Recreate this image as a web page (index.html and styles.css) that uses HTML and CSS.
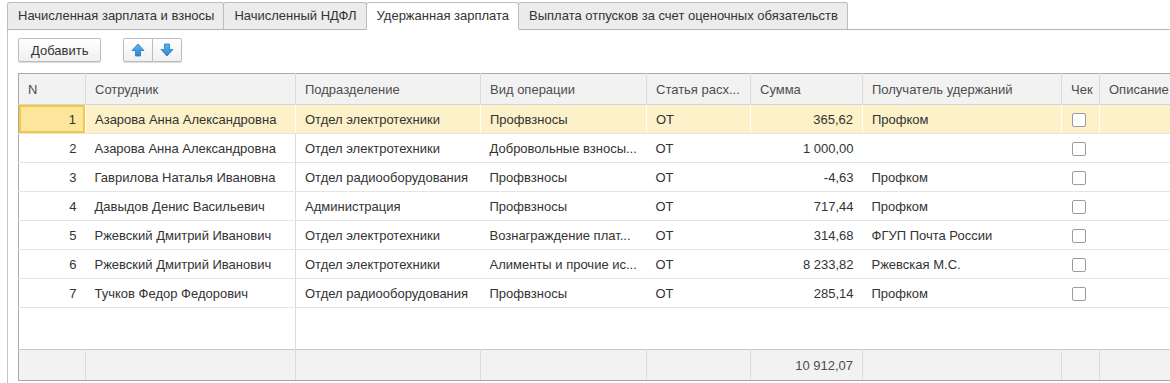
FILE: index.html
```html
<!DOCTYPE html>
<html lang="ru">
<head>
<meta charset="utf-8">
<link rel="stylesheet" href="styles.css">
</head>
<body>
<div class="tabs">
  <div class="tab">Начисленная зарплата и взносы</div>
  <div class="tab">Начисленный НДФЛ</div>
  <div class="tab active">Удержанная зарплата</div>
  <div class="tab">Выплата отпусков за счет оценочных обязательств</div>
  <div class="tab-rest"></div>
</div>
<div class="panel">
  <div class="toolbar">
    <button class="btn">Добавить</button>
    <div class="btn-group">
      <button class="btn icon-btn"><svg width="14" height="14" viewBox="0 0 14 14"><defs><linearGradient id="ga" x1="0" y1="0" x2="0" y2="1"><stop offset="0" stop-color="#5db6f0"/><stop offset="1" stop-color="#2a87d3"/></linearGradient></defs><path d="M7 1 L13 7.5 L9.5 7.5 L9.5 13 L4.5 13 L4.5 7.5 L1 7.5 Z" fill="url(#ga)" stroke="#2477bd" stroke-width="0.8" stroke-linejoin="round"/></svg></button>
      <button class="btn icon-btn"><svg width="14" height="14" viewBox="0 0 14 14"><defs><linearGradient id="gb" x1="0" y1="0" x2="0" y2="1"><stop offset="0" stop-color="#5db6f0"/><stop offset="1" stop-color="#2a87d3"/></linearGradient></defs><path d="M7 13 L13 6.5 L9.5 6.5 L9.5 1 L4.5 1 L4.5 6.5 L1 6.5 Z" fill="url(#gb)" stroke="#2477bd" stroke-width="0.8" stroke-linejoin="round"/></svg></button>
    </div>
  </div>
  <div class="grid-wrap">
    <table class="grid">
      <colgroup>
        <col class="c-n"><col class="c-emp"><col class="c-dep"><col class="c-op"><col class="c-art"><col class="c-sum"><col class="c-rec"><col class="c-chk"><col class="c-desc">
      </colgroup>
      <thead>
        <tr>
          <th>N</th><th>Сотрудник</th><th>Подразделение</th><th>Вид операции</th><th>Статья расх...</th><th>Сумма</th><th>Получатель удержаний</th><th>Чек</th><th>Описание</th>
        </tr>
      </thead>
      <tbody>
        <tr class="current">
          <td class="num cur-cell">1</td><td class="fix">Азарова Анна Александровна</td><td>Отдел электротехники</td><td>Профвзносы</td><td>ОТ</td><td class="num">365,62</td><td>Профком</td><td class="chk"><span class="box"></span></td><td></td>
        </tr>
        <tr>
          <td class="num">2</td><td class="fix">Азарова Анна Александровна</td><td>Отдел электротехники</td><td>Добровольные взносы...</td><td>ОТ</td><td class="num">1 000,00</td><td></td><td class="chk"><span class="box"></span></td><td></td>
        </tr>
        <tr>
          <td class="num">3</td><td class="fix">Гаврилова Наталья Ивановна</td><td>Отдел радиооборудования</td><td>Профвзносы</td><td>ОТ</td><td class="num">-4,63</td><td>Профком</td><td class="chk"><span class="box"></span></td><td></td>
        </tr>
        <tr>
          <td class="num">4</td><td class="fix">Давыдов Денис Васильевич</td><td>Администрация</td><td>Профвзносы</td><td>ОТ</td><td class="num">717,44</td><td>Профком</td><td class="chk"><span class="box"></span></td><td></td>
        </tr>
        <tr>
          <td class="num">5</td><td class="fix">Ржевский Дмитрий Иванович</td><td>Отдел электротехники</td><td>Вознаграждение плат...</td><td>ОТ</td><td class="num">314,68</td><td>ФГУП Почта России</td><td class="chk"><span class="box"></span></td><td></td>
        </tr>
        <tr>
          <td class="num">6</td><td class="fix">Ржевский Дмитрий Иванович</td><td>Отдел электротехники</td><td>Алименты и прочие ис...</td><td>ОТ</td><td class="num">8 233,82</td><td>Ржевская М.С.</td><td class="chk"><span class="box"></span></td><td></td>
        </tr>
        <tr>
          <td class="num">7</td><td class="fix">Тучков Федор Федорович</td><td>Отдел радиооборудования</td><td>Профвзносы</td><td>ОТ</td><td class="num">285,14</td><td>Профком</td><td class="chk"><span class="box"></span></td><td></td>
        </tr>
        <tr class="filler">
          <td></td><td class="fix"></td><td></td><td></td><td></td><td></td><td></td><td></td><td></td>
        </tr>
      </tbody>
      <tfoot>
        <tr>
          <td></td><td></td><td></td><td></td><td></td><td class="num">10 912,07</td><td></td><td></td><td></td>
        </tr>
      </tfoot>
    </table>
  </div>
</div>
</body>
</html>
```

FILE: styles.css
```css
html, body {
  margin: 0;
  padding: 0;
  background: #fff;
  overflow: hidden;
}
body {
  font-family: "Liberation Sans", Arial, sans-serif;
  font-size: 13px;
  color: #333;
  width: 1170px;
  height: 383px;
}
.tabs {
  display: flex;
  align-items: flex-end;
  padding-top: 2px;
  padding-left: 7px;
  height: 28px;
  box-sizing: content-box;
}
.tab {
  height: 26px;
  line-height: 26px;
  padding: 0 9px 0 10px;
  background: #ececec;
  border: 1px solid #bdbdbd;
  border-bottom: 1px solid #b4b4b4;
  border-radius: 3px 3px 0 0;
  margin-right: -1px;
  color: #333;
  white-space: nowrap;
}
.tab.active {
  background: #fff;
  border-bottom-color: #fff;
  position: relative;
  z-index: 1;
}
.tab-rest {
  flex: 1;
  border-bottom: 1px solid #b4b4b4;
  height: 0;
}
.panel {
  border-left: 1px solid #c4c4c4;
  margin-left: 7px;
  padding-left: 10px;
  height: 360px;
}
.toolbar {
  display: flex;
  align-items: center;
  gap: 22px;
  padding-top: 8px;
  height: 24px;
}
.btn {
  font-family: inherit;
  font-size: 13px;
  color: #333;
  height: 24px;
  padding: 0 12px;
  border: 1px solid #bcbcbc;
  border-radius: 2px;
  background: linear-gradient(#ffffff, #f0f0f0);
  box-shadow: 0 1px 1px rgba(0,0,0,0.15);
  margin: 0;
}
.btn-group {
  display: flex;
  border-radius: 2px;
  box-shadow: 0 1px 1px rgba(0,0,0,0.15);
}
.btn-group .icon-btn {
  box-shadow: none;
  width: 30px;
  padding: 0;
  display: flex;
  align-items: center;
  justify-content: center;
  border-radius: 0;
}
.btn-group .icon-btn:first-child {
  border-radius: 2px 0 0 2px;
  border-right: 1px solid #bcbcbc;
}
.btn-group .icon-btn:last-child {
  border-radius: 0 2px 2px 0;
  border-left: none;
  width: 29px;
}
.grid-wrap {
  margin-top: 11px;
  width: 1200px;
}
.grid {
  table-layout: fixed;
  border-collapse: collapse;
  width: 1190px;
  border: 1px solid #a9a9a9;
  border-right: none;
}
.c-n { width: 67px; }
.c-emp { width: 210px; }
.c-dep { width: 185px; }
.c-op { width: 166px; }
.c-art { width: 104px; }
.c-sum { width: 112px; }
.c-rec { width: 199px; }
.c-chk { width: 38px; }
.c-desc { width: 109px; }
th {
  height: 30px;
  background: #f2f2f2;
  font-weight: normal;
  text-align: left;
  color: #4d4d4d;
  padding: 0 9px;
  border-right: 1px solid #dcdcdc;
  border-bottom: 1px solid #d6d6d6;
  white-space: nowrap;
  overflow: hidden;
}
td {
  height: 28px;
  padding: 0 9px;
  border-bottom: 1px solid #e5e5e5;
  white-space: nowrap;
  overflow: hidden;
}
td.num {
  text-align: right;
}
td.fix {
  border-right: 1px solid #dcdcdc;
}
tr.current td {
  background: #fcf1c8;
  border-right: 1px solid #fff;
}
tr.current td.cur-cell {
  background: #fbe69c;
  box-shadow: inset 0 0 0 2px #f5c842;
}
td.chk {
  text-align: left;
  padding-left: 10px;
}
.box {
  display: inline-block;
  width: 12px;
  height: 12px;
  border: 1px solid #9c9c9c;
  border-radius: 2px;
  background: #fff;
  vertical-align: middle;
}
tr.filler td {
  height: 41px;
  border-bottom: none;
}
tfoot td {
  height: 30px;
  background: #f2f2f2;
  border-top: 1px solid #c8c8c8;
  border-right: 1px solid #dcdcdc;
  border-bottom: 1px solid #a9a9a9;
  color: #4d4d4d;
}
```
